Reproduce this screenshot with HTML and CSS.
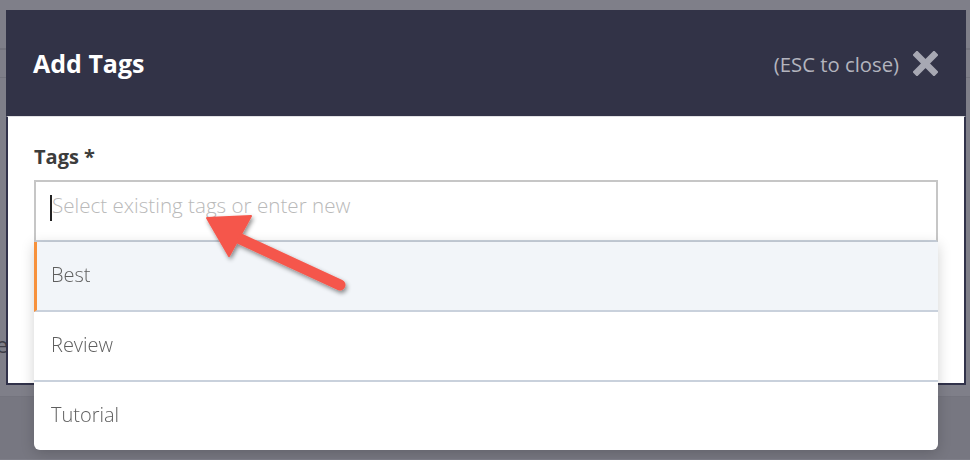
FILE: index.html
```html
<!DOCTYPE html>
<html>
<head>
<meta charset="utf-8">
<link rel="stylesheet" href="styles.css">
</head>
<body>
<div class="page">
  <div class="page-top"></div>
  <div class="page-row"></div>
  <div class="page-row page-main"><span class="page-text">e</span></div>
  <div class="page-row page-foot"><div class="page-cell"></div></div>
</div>

<div class="backdrop">
  <div class="modal">
    <div class="modal-header">
      <h1 class="modal-title">Add Tags</h1>
      <div class="modal-close">
        <span class="esc-hint">(ESC to close)</span>
        <svg class="close-icon" width="25" height="25" viewBox="0 0 25 25" aria-hidden="true">
          <path d="M4 4 L21 21 M21 4 L4 21" stroke="#a7a8b3" stroke-width="6.5" stroke-linecap="square" fill="none"/>
        </svg>
      </div>
    </div>
    <div class="modal-body">
      <label class="field-label">Tags *</label>
      <div class="field">
        <div class="tag-input">
          <span class="caret"></span><span class="placeholder">Select existing tags or enter new</span>
        </div>
        <ul class="dropdown">
          <li class="option option-active">Best</li>
          <li class="option">Review</li>
          <li class="option">Tutorial</li>
        </ul>
      </div>
    </div>
  </div>
</div>

<svg class="annotation" width="970" height="460" viewBox="0 0 970 460" aria-hidden="true">
  <defs>
    <filter id="shadow" x="-20%" y="-20%" width="140%" height="140%">
      <feDropShadow dx="1.5" dy="2.5" stdDeviation="2" flood-color="#000" flood-opacity="0.45"/>
    </filter>
  </defs>
  <g filter="url(#shadow)" fill="#f5574b" stroke="#f5574b">
    <line x1="234" y1="236" x2="340" y2="285" stroke-width="11" stroke-linecap="round"/>
    <polygon points="207,218 251,216 229,256" stroke-width="2" stroke-linejoin="round"/>
  </g>
</svg>
</body>
</html>
```

FILE: styles.css
```css
* {
  box-sizing: border-box;
}

html, body {
  margin: 0;
  padding: 0;
}

body {
  width: 970px;
  height: 460px;
  overflow: hidden;
  background: #7f7f89;
  font-family: "Open Sans", "Liberation Sans", sans-serif;
}

/* page behind the dimmed overlay */
.page {
  display: flex;
  flex-direction: column;
}

.page-top {
  height: 50px;
  border-bottom: 2px solid #74747e;
}

.page-row {
  height: 28px;
  border-bottom: 1px solid #74747e;
}

.page-main {
  height: 319px;
  display: flex;
  align-items: flex-start;
  padding-top: 252px;
}

.page-text {
  margin-left: -4px;
  font-size: 22px;
  line-height: 28px;
  color: #3d3d47;
}

.page-foot {
  height: 62px;
  border-bottom: none;
  background: #777781;
}

/* modal */
.backdrop {
  position: fixed;
  inset: 0;
  padding: 10px 0 0 6px;
}

.modal {
  width: 960px;
  display: flex;
  flex-direction: column;
}

.modal-header {
  height: 106px;
  background: #323347;
  display: flex;
  align-items: center;
  justify-content: space-between;
  padding: 0 28px 0 27px;
}

.modal-title {
  margin: 0;
  font-size: 25px;
  font-weight: 700;
  color: #ffffff;
  line-height: 1;
}

.modal-close {
  display: flex;
  align-items: center;
  gap: 14px;
}

.esc-hint {
  font-size: 20.3px;
  color: #b3b4be;
  line-height: 1;
  padding-top: 2px;
}

.close-icon {
  display: block;
}

.modal-body {
  height: 269px;
  background: #ffffff;
  border: 2px solid #31324a;
  border-top: 1px solid #e1e1e4;
  padding: 26px 26px 0 26px;
}

.field-label {
  display: block;
  font-size: 20px;
  font-weight: 700;
  line-height: 28px;
  color: #3c3c3c;
  margin-bottom: 9px;
}

.field {
  position: relative;
}

.tag-input {
  height: 62px;
  border: 2px solid #c6c6c6;
  border-bottom-color: #c9d1dc;
  display: flex;
  align-items: center;
  padding: 0 0 12px 14px;
}

.caret {
  width: 2px;
  height: 26px;
  margin-top: 6px;
  background: #222;
}

.placeholder {
  font-size: 20.6px;
  font-weight: 300;
  color: #b9b9b9;
}

.dropdown {
  position: absolute;
  top: 100%;
  left: 0;
  right: 0;
  margin: 0;
  padding: 0;
  list-style: none;
  background: #ffffff;
  border-radius: 0 0 6px 6px;
  box-shadow: 0 3px 14px rgba(0, 0, 0, 0.18);
  overflow: hidden;
}

.option {
  height: 70px;
  line-height: 66px;
  padding-left: 17px;
  font-size: 20px;
  font-weight: 300;
  color: #5e5e5e;
  border-bottom: 2px solid #c9d1dc;
}

.option:last-child {
  height: 68px;
  border-bottom: none;
}

.option-active {
  background: #f2f5f9;
  border-left: 3px solid #f7913b;
  padding-left: 14px;
}

.annotation {
  position: absolute;
  left: 0;
  top: 0;
  pointer-events: none;
}
```
